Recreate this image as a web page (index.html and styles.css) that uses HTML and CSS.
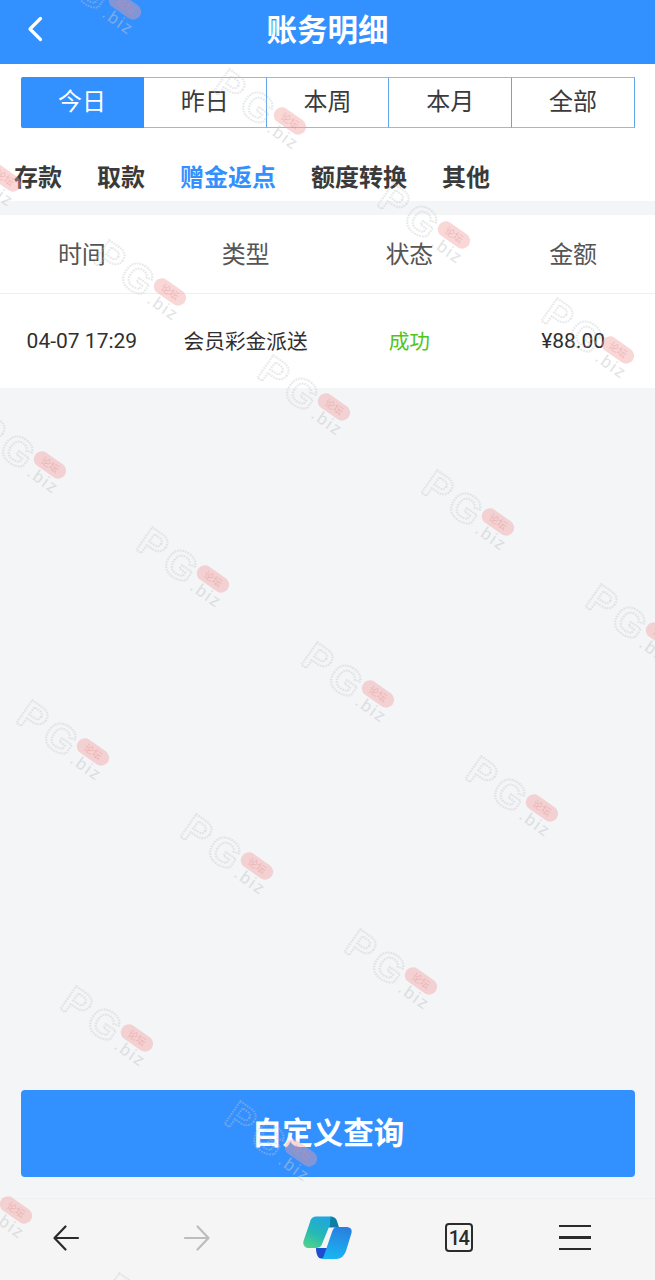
FILE: index.html
```html
<!DOCTYPE html>
<html lang="zh-CN">
<head>
    <meta charset="UTF-8">
    <meta name="viewport" content="width=device-width, initial-scale=1.0">
    <title>账务明细</title>
    <link rel="stylesheet" href="styles.css">
</head>
<body>
    <div class="page">
        <header class="top-bar">
            <svg class="back-icon" viewBox="0 0 16 26" width="16" height="26">
                <path d="M13.5 2.5 L3 13 L13.5 23.5" fill="none" stroke="#fff" stroke-width="3.2" stroke-linecap="round" stroke-linejoin="round"/>
            </svg>
            <h1>账务明细</h1>
        </header>

        <div class="date-tabs">
            <div class="date-tab active">今日</div>
            <div class="date-tab">昨日</div>
            <div class="date-tab">本周</div>
            <div class="date-tab">本月</div>
            <div class="date-tab">全部</div>
        </div>

        <nav class="type-nav">
            <a>存款</a>
            <a>取款</a>
            <a class="current">赠金返点</a>
            <a>额度转换</a>
            <a>其他</a>
        </nav>

        <main class="content">
            <div class="record-table">
                <div class="record-row head">
                    <span>时间</span>
                    <span>类型</span>
                    <span>状态</span>
                    <span>金额</span>
                </div>
                <div class="record-row">
                    <span class="num">04-07 17:29</span>
                    <span>会员彩金派送</span>
                    <span class="ok">成功</span>
                    <span class="num">¥88.00</span>
                </div>
            </div>
            <button class="query-btn">自定义查询</button>
        </main>

        <footer class="browser-bar">
            <svg viewBox="0 0 28 28" width="28" height="28">
                <path d="M26 14 H3 M13.5 2.5 L2.5 14 L13.5 25.5" fill="none" stroke="#2b2b2b" stroke-width="2.2" stroke-linecap="round" stroke-linejoin="round"/>
            </svg>
            <svg viewBox="0 0 28 28" width="28" height="28">
                <path d="M2 14 H25 M14.5 2.5 L25.5 14 L14.5 25.5" fill="none" stroke="#bdbdbd" stroke-width="2.2" stroke-linecap="round" stroke-linejoin="round"/>
            </svg>
            <svg viewBox="0 0 50 44" width="50" height="44">
                <defs>
                    <linearGradient id="copilotLeft" x1="0.7" y1="0" x2="0.3" y2="1">
                        <stop offset="0" stop-color="#1fa6e0"/>
                        <stop offset="0.55" stop-color="#25b9b4"/>
                        <stop offset="1" stop-color="#4fd08f"/>
                    </linearGradient>
                    <linearGradient id="copilotRight" x1="0.6" y1="0" x2="0.4" y2="1">
                        <stop offset="0" stop-color="#2a7fe0"/>
                        <stop offset="1" stop-color="#18b6f2"/>
                    </linearGradient>
                </defs>
                <path d="M27 .5 C31 .5 33 2 34 5 L36 11.5 H26 Z" fill="#0f7ea6"/>
                <path d="M13 32 H25 L21 42.5 H18 C15 42.5 13 38 13 32 Z" fill="#1c4fd0"/>
                <path d="M14 .5 H28 C27 3 27 8 26 11 L19 28 C18 31 16 32 12 32 H6 C2 32 -.5 29 .5 25 L7 6 C8 2 10 .5 14 .5 Z" fill="url(#copilotLeft)"/>
                <path d="M34 11 H43 C47 11 49.500 13 48.500 17 L43 35 C41 40 38 43 33 43 H17 C20 43 20.500 41 21.500 38 L29 16 C30 13 31 11 34 11 Z" fill="url(#copilotRight)"/>
            </svg>
            <div class="tab-count">14</div>
            <div class="menu-icon"><i></i><i></i><i></i></div>
        </footer>

        <svg class="watermarks" viewBox="0 0 655 1280" width="655" height="1280">
            <defs>
                <g id="wm">
                    <g transform="rotate(35)">
                        <text class="wm-letter" x="-82" y="20">P</text>
                        <text class="wm-letter" x="-50" y="21">G</text>
                        <text class="wm-site" x="-14" y="22">.biz</text>
                        <rect class="wm-pill" x="-18" y="-8" width="36" height="16" rx="8"/>
                        <text class="wm-pill-text" x="0" y="3.5">论坛</text>
                    </g>
                </g>
            </defs>
            <use href="#wm" x="125" y="6"/>
            <use href="#wm" x="290" y="121"/>
            <use href="#wm" x="454" y="235"/>
            <use href="#wm" x="618" y="350"/>
            <use href="#wm" x="5" y="178"/>
            <use href="#wm" x="170" y="292"/>
            <use href="#wm" x="334" y="407"/>
            <use href="#wm" x="498" y="522"/>
            <use href="#wm" x="662" y="636"/>
            <use href="#wm" x="50" y="465"/>
            <use href="#wm" x="213" y="579"/>
            <use href="#wm" x="378" y="694"/>
            <use href="#wm" x="542" y="808"/>
            <use href="#wm" x="93" y="752"/>
            <use href="#wm" x="257" y="866"/>
            <use href="#wm" x="421" y="981"/>
            <use href="#wm" x="137" y="1038"/>
            <use href="#wm" x="301" y="1153"/>
            <use href="#wm" x="16" y="1210"/>
            <use href="#wm" x="180" y="1325"/>
        </svg>
    </div>
</body>
</html>
```

FILE: styles.css
```css
body {
    margin: 0;
    font-family: "Noto Sans CJK SC", "Noto Sans", sans-serif;
    background-color: #f4f5f7;
    color: #333;
}
.page {
    position: relative;
    width: 655px;
    height: 1280px;
    overflow: hidden;
    display: flex;
    flex-direction: column;
}
.top-bar {
    height: 64px;
    flex: none;
    background: #3390ff;
    display: flex;
    align-items: center;
    justify-content: center;
    position: relative;
}
.top-bar h1 {
    margin: 0;
    padding-bottom: 7px;
    color: #fff;
    font-size: 30.5px;
    font-weight: 700;
    line-height: 1;
}
.back-icon {
    position: absolute;
    left: 27px;
    top: 16px;
}
.date-tabs {
    flex: none;
    background: #fff;
    padding: 13px 20px 0 21px;
    display: flex;
}
.date-tab {
    flex: 1;
    height: 51px;
    box-sizing: border-box;
    padding-bottom: 6px;
    border: 1px solid #86bdf2;
    border-left: 0;
    border-right-color: #5fa6ea;
    display: flex;
    align-items: center;
    justify-content: center;
    font-size: 24px;
    color: #3a3a3a;
}
.date-tab.active {
    background: #3390ff;
    color: #fff;
    border-color: #3390ff;
    border-radius: 2px 0 0 2px;
}
.type-nav {
    flex: none;
    height: 73px;
    box-sizing: border-box;
    background: #fff;
    padding: 22px 14px 0;
    display: flex;
    gap: 35px;
    align-items: center;
    font-size: 24px;
    font-weight: 700;
    color: #3a3a3a;
}
.type-nav a {
    line-height: 1;
}
.type-nav .current {
    color: #3390ff;
}
.content {
    flex: 1;
    padding-top: 14px;
    display: flex;
    flex-direction: column;
}
.record-table {
    background: #fff;
}
.record-row {
    display: grid;
    grid-template-columns: repeat(4, 1fr);
    height: 94px;
    padding-bottom: 3px;
    box-sizing: border-box;
    align-items: center;
    text-align: center;
    font-size: 20.7px;
    color: #2f2f2f;
}
.record-row.head {
    height: 79px;
    padding-bottom: 4px;
    font-size: 24px;
    color: #555;
    border-bottom: 1px solid #f0f0f0;
}
.record-row .num {
    padding-top: 3px;
    font-family: Roboto, "Noto Sans", sans-serif;
    font-size: 21px;
}
.record-row .ok {
    color: #52c41a;
}
.query-btn {
    margin: auto 20px 21px 21px;
    height: 87px;
    padding: 0 0 6px;
    border: 0;
    border-radius: 4px;
    background: #3390ff;
    color: #fff;
    font-family: inherit;
    font-size: 30.5px;
    font-weight: 700;
}
.browser-bar {
    flex: none;
    height: 82px;
    box-sizing: border-box;
    padding-bottom: 4px;
    border-top: 1px solid #f0f0f0;
    background: #f5f5f5;
    display: grid;
    grid-template-columns: repeat(4, 131px) 102px;
    justify-items: center;
    align-items: center;
}
.tab-count {
    width: 28px;
    height: 29px;
    box-sizing: border-box;
    border: 2.5px solid #2b2b2b;
    border-radius: 4px;
    display: flex;
    align-items: center;
    justify-content: center;
    font-family: Roboto, sans-serif;
    font-size: 20px;
    font-weight: 500;
    letter-spacing: -1.5px;
    color: #2b2b2b;
}
.menu-icon {
    width: 32px;
    display: flex;
    flex-direction: column;
    gap: 9px;
}
.menu-icon i {
    display: block;
    height: 2.5px;
    background: #2b2b2b;
}
.watermarks {
    position: absolute;
    left: 0;
    top: 0;
    pointer-events: none;
}
.wm-letter {
    font-family: "Liberation Sans", sans-serif;
    font-size: 40px;
    font-weight: 700;
    fill: none;
    stroke: #c4c8cc;
    stroke-width: 2;
    stroke-dasharray: 1.5 1.2;
    opacity: 0.42;
}
.wm-site {
    font-family: "Liberation Sans", sans-serif;
    font-size: 17px;
    letter-spacing: 2px;
    fill: #c4c8cc;
    opacity: 0.5;
}
.wm-pill {
    fill: #f0a0a0;
    opacity: 0.42;
}
.wm-pill-text {
    font-size: 10px;
    text-anchor: middle;
    fill: #e58a8a;
    opacity: 0.4;
}
```
